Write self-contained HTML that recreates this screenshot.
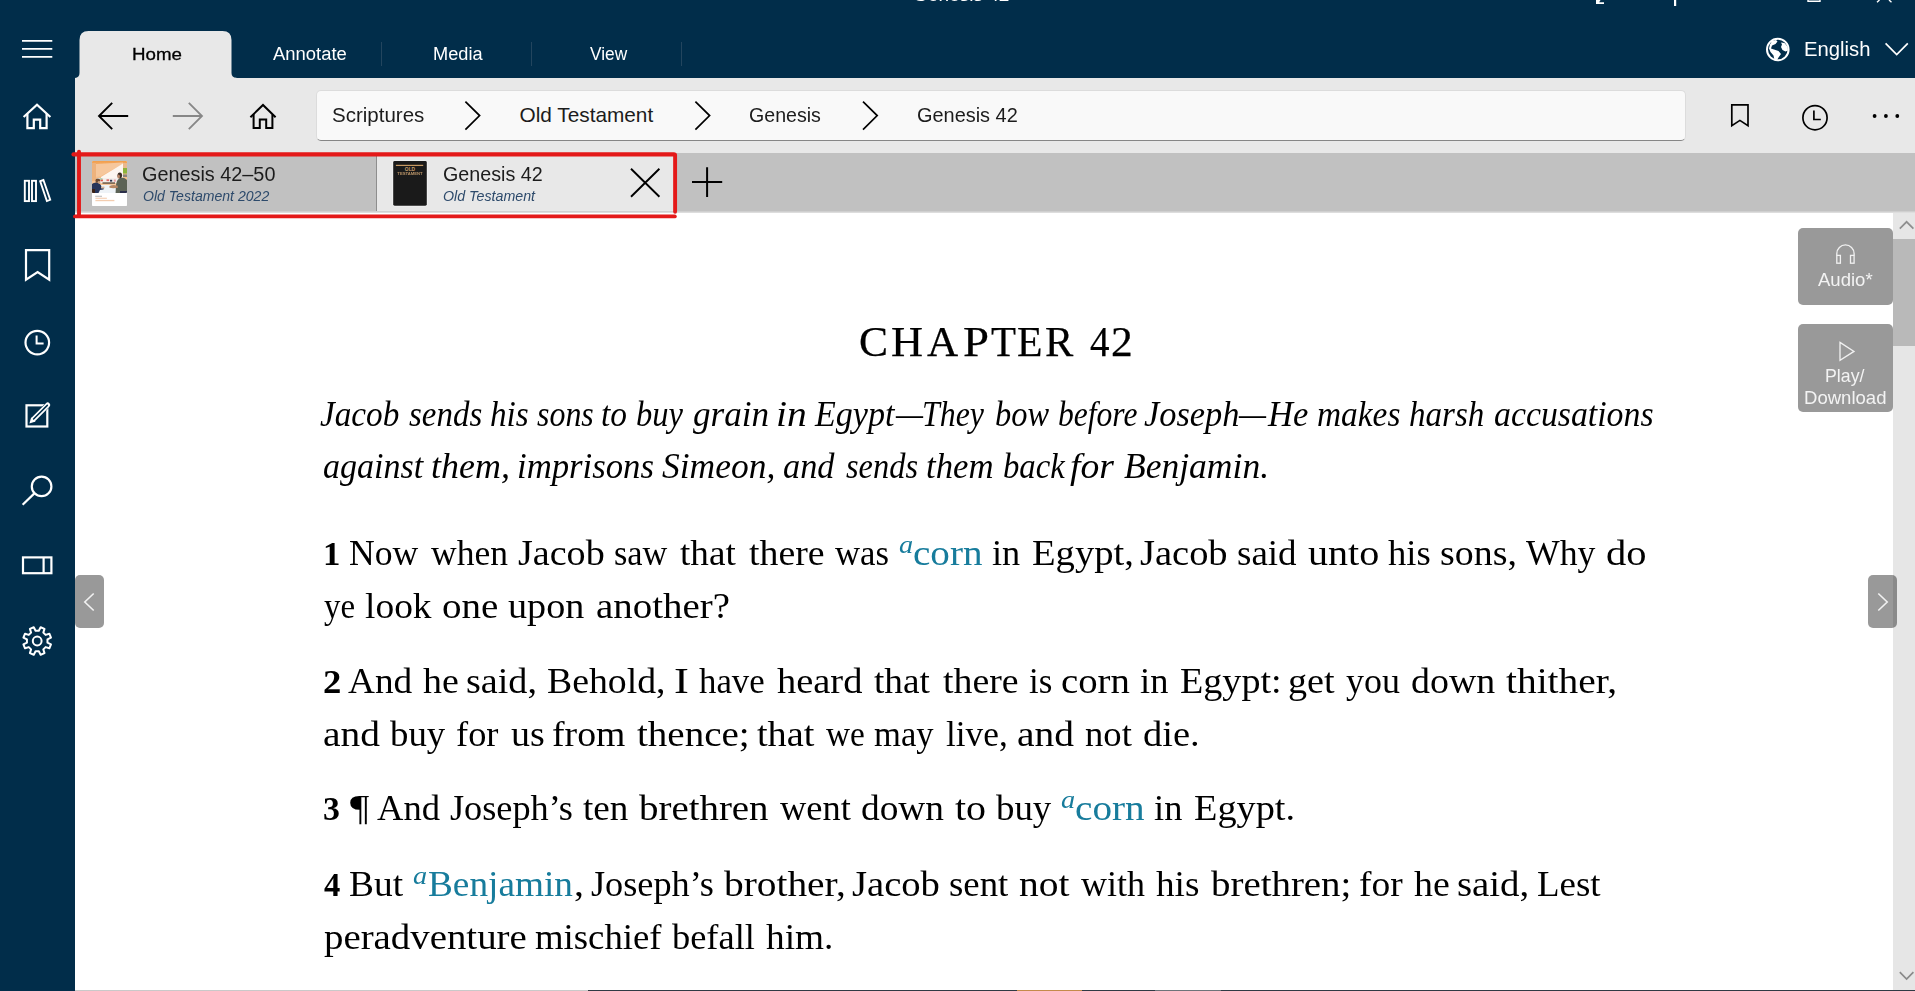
<!DOCTYPE html>
<html lang="en">
<head>
<meta charset="utf-8">
<title>Genesis 42</title>
<style>
*{margin:0;padding:0;box-sizing:border-box}
html,body{width:1915px;height:991px;overflow:hidden;background:#fff}
body{position:relative;font-family:"Liberation Sans",sans-serif;color:#000}
.abs{position:absolute}
.t{position:absolute;white-space:nowrap;line-height:1;transform-origin:0 0}
#topbar{left:0;top:0;width:1915px;height:78px;background:#012d4a}
#sidebar{left:0;top:0;width:75px;height:991px;background:#012d4a}
#navbar{left:75px;top:78px;width:1840px;height:75px;background:#e8e8e8}
#tabbar{left:75px;top:153px;width:1840px;height:58px;background:#c1c1c1}
#tabshadow{left:75px;top:211px;width:1840px;height:2px;background:linear-gradient(#c8c8c8,#e4e4e4)}
#crumb{left:315.5px;top:90px;width:1370.5px;height:51px;background:#f9f9f9;border:1px solid #dcdcdc;border-bottom:1.5px solid #868686;border-radius:5px}
.rt{color:#fff;font-size:17.6px}
.sep{position:absolute;top:42px;width:1px;height:24px;background:#23455e}
.bc{font-size:20px;color:#1a1a1a}
#tab1{left:80px;top:156px;width:297px;height:55px;background:#c1c1c1}
#tab2{left:377px;top:156px;width:297px;height:55px;background:#e8e8e8}
.tt{font-size:20px;color:#1a1a1a}
.ts{font-size:14.6px;font-style:italic;color:#2b4a6e}
#scroll{left:1895px;top:213px;width:20px;height:778px;background:#e6e6e6}
#thumb{left:1895px;top:240px;width:20px;height:106px;background:#c1c1c1}
.sb{position:absolute;background:#999;border-radius:5px;color:#f4f4f4;font-size:17.5px;text-align:center}
.s{font-family:"Liberation Serif",serif;color:#000;font-size:35px}
.hd{-webkit-text-stroke:0.25px #000}
.b{font-weight:bold}.i{font-style:italic}
.lk{color:#177c9c}
</style>
</head>
<body>
<div id="topbar" class="abs"></div>
<div id="sidebar" class="abs"></div>
<div id="navbar" class="abs"></div>
<div id="tabbar" class="abs"></div>
<div id="tabshadow" class="abs"></div>
<div id="crumb" class="abs"></div>

<svg class="abs" style="left:0;top:0" width="1915" height="991" viewBox="0 0 1915 991" fill="none" stroke-linecap="butt" stroke-linejoin="miter">
<!-- ribbon home tab -->
<path d="M75 78.500 V78 Q79.500 77.600 79.500 73 L79.500 40 Q79.500 31 88.500 31 L222.500 31 Q231.500 31 231.500 40 L231.500 73 Q231.500 77.700 236.500 77.700 L236.500 78.500 Z" fill="#e8e8e8"/>
<!-- hamburger -->
<g stroke="#fff" stroke-width="1.9">
<path d="M22 40.9H52.3M22 48.9H52.3M22 56.9H52.3"/>
</g>
<!-- sidebar icons -->
<g stroke="#fff" stroke-width="2.2" stroke-linejoin="miter">
<path d="M23.6 117 L37 104.8 L50.4 117"/>
<path d="M27.4 113.6 V128.2 H33.8 V119.6 H40.2 V128.2 H46.6 V113.6"/>
<g stroke-width="1.9"><rect x="24.8" y="180.8" width="4.2" height="20.3"/>
<rect x="32" y="180.8" width="4" height="20.3"/>
<path d="M40.2 181.2 L43.4 180 L50.2 199.8 L46.9 201.1 Z"/></g>
<path d="M26 250.2 H49.2 V279.6 L37.6 272 L26 279.6 Z"/>
<circle cx="37.3" cy="342.6" r="11.8"/>
<path d="M36.6 335.4 V343.6 H43.6" stroke-width="2"/>
<rect x="26.5" y="405.3" width="20.8" height="21.2" stroke-width="2.2"/>
<path d="M33.6 418.9 L47.7 405" stroke="#012d4a" stroke-width="5.6" stroke-linecap="round"/>
<path d="M33.7 418.9 L47.7 405" stroke-width="5" stroke-linecap="round"/>
<path d="M29.4 423.400 L31.2 417.2 L35.6 421.6 Z" fill="#fff" stroke="none"/>
<path d="M33.6 419 L47.3 405.400" stroke="#012d4a" stroke-width="1.500" stroke-linecap="round"/>
<circle cx="41.6" cy="486.4" r="9.8"/>
<path d="M34.4 493.4 L22.6 504.8"/>
<rect x="23" y="557.4" width="28.4" height="15.8"/>
<path d="M43.6 557.4 V573.2"/>
<circle cx="37.2" cy="641" r="4.4" stroke-width="2"/>
</g>
<!-- gear -->
<path id="gear" d="M47.47 642.63 L50.98 644.44 L49.37 648.31 L45.61 647.11 L43.31 649.41 L44.51 653.17 L40.64 654.78 L38.83 651.27 L35.57 651.27 L33.76 654.78 L29.89 653.17 L31.09 649.41 L28.79 647.11 L25.03 648.31 L23.42 644.44 L26.93 642.63 L26.93 639.37 L23.42 637.56 L25.03 633.69 L28.79 634.89 L31.09 632.59 L29.89 628.83 L33.76 627.22 L35.57 630.73 L38.83 630.73 L40.64 627.22 L44.51 628.83 L43.31 632.59 L45.61 634.89 L49.37 633.69 L50.98 637.56 L47.47 639.37 Z" stroke="#fff" stroke-width="2" stroke-linejoin="round"/>
<!-- nav icons -->
<g stroke="#000" stroke-width="1.7">
<path stroke-width="1.9" d="M98.8 116 H128.2 M112.2 102.8 L99 116 L112.2 129.2"/>
<path d="M250.4 117.2 L263 105 L275.6 117.2" stroke-width="2"/>
<path d="M253.6 114.4 V128 H259.8 V119.6 H266.2 V128 H272.4 V114.4" stroke-width="2"/>
<path d="M465.4 101.6 L479.6 115.6 L465.4 129.6"/>
<path d="M695.4 101.6 L709.6 115.6 L695.4 129.6"/>
<path d="M863 101.6 L877.2 115.6 L863 129.6"/>
<path d="M1731.8 104.8 H1748 V125.6 L1739.9 120.4 L1731.8 125.6 Z"/>
<circle cx="1815" cy="117.7" r="12.1"/>
<path d="M1813.9 110.6 V119.5 H1820.8"/>
</g>
<g stroke="#878787" stroke-width="1.8">
<path d="M172.8 116 H202.2 M188.8 102.8 L202 116 L188.8 129.2"/>
</g>
<g fill="#000"><circle cx="1874.6" cy="116" r="1.9"/><circle cx="1885.9" cy="116" r="1.9"/><circle cx="1897.3" cy="116" r="1.9"/></g>
<!-- globe -->
<circle cx="1777.8" cy="49.5" r="10.8" stroke="#fff" stroke-width="2"/>
<path d="M1772 41 l4 -1 l1.5 1.5 l-2 2.5 l-3.5 1.5 l-1 3 l3 1 l4.5 1.5 l2.5 3 l-2.5 3.5 l-2 3.5 l-2 -0.5 l-1 -5 l-3 -3.500 l-1.5 -3.500 l1 -4 Z" fill="#fff"/>
<path d="M1781 42.500 l3.500 0.500 l3 3.500 l0.500 4 l-2.500 1 l-3 -1.500 l-1.500 -3 l1 -2.500 Z" fill="#fff"/>
<path d="M1885.6 43.4 L1896.7 54.6 L1907.8 43.4" stroke="#fff" stroke-width="1.7"/>
<!-- window control fragments -->
<path d="M1596 0 H1600.500 L1599.200 2.200 H1604 V4 H1596 Z" fill="#fff"/>
<rect x="1674" y="0" width="2.200" height="6" fill="#fff"/>
<g stroke="#fff" stroke-width="1.400">
<path d="M1808 0 V1.200 H1820 V0"/>
<path d="M1877 2.200 L1879.500 0 M1891.500 2.200 L1889 0"/>
</g>
</svg>

<div class="sep" style="left:380.5px"></div><div class="sep" style="left:530.5px"></div><div class="sep" style="left:680.5px"></div>


<div id="tab1" class="abs"></div>
<div class="abs" style="left:376px;top:156px;width:1px;height:55px;background:#8e8e8e"></div>
<div id="tab2" class="abs"></div>
<!-- thumb 1 -->
<svg class="abs" style="left:92px;top:161px" width="35" height="45" viewBox="0 0 35 45">
<defs>
<linearGradient id="og" x1="0" y1="0" x2="0" y2="1"><stop offset="0" stop-color="#f29538"/><stop offset=".18" stop-color="#f4b172"/><stop offset="1" stop-color="#f6d2b0"/></linearGradient>
<filter id="bl" x="-10%" y="-10%" width="120%" height="120%"><feGaussianBlur stdDeviation="0.55"/></filter>
<clipPath id="cp"><rect width="35" height="32" rx="0.8"/></clipPath>
</defs>
<rect width="35" height="45" rx="0.8" fill="#fff"/>
<g clip-path="url(#cp)"><g filter="url(#bl)">
<rect x="-2" y="-2" width="39" height="36" fill="url(#og)"/>
<rect x="-1" y="2" width="5" height="18" fill="#eeb27c"/>
<path d="M4 3 L31 1.500 L31 3 L9 15 L4 16 Z" fill="#f6c79c"/>
<path d="M9 16 L31 2.500 L31 20 L9 21 Z" fill="#fdf6f0"/>
<rect x="31" y="2" width="5" height="12" fill="#e9b98d"/>
<rect x="31" y="7" width="4.500" height="5.500" fill="#8db43a"/>
<rect x="31" y="13.500" width="5" height="2.500" fill="#8a8478"/>
<rect x="5" y="17" width="24" height="5" fill="#f3eeea"/>
<rect x="8.500" y="18.500" width="2.400" height="1.800" fill="#d8574a"/><rect x="7.500" y="17.500" width="3" height="0.900" fill="#7fb88a"/>
<rect x="14.500" y="18.300" width="2.600" height="1.800" fill="#e06a6a"/>
<rect x="18" y="18.800" width="2.200" height="1.800" fill="#2b3550"/>
<rect x="21.800" y="18.500" width="2" height="2.200" fill="#e79aa0"/>
<rect x="10.500" y="21.300" width="12.500" height="1.500" fill="#6a5847"/>
<path d="M5 24 L28 24 L30 33 L3 33 Z" fill="#eef3f7"/>
<path d="M23.500 33 L24 24 q0.500 -6 5 -7.500 q4 0 6.500 3 V33 Z" fill="#5b6457"/>
<ellipse cx="27.800" cy="14.300" rx="2.300" ry="2.900" fill="#3b2c24"/>
<ellipse cx="26.600" cy="15.500" rx="1.300" ry="1.900" fill="#b98a6c"/>
<path d="M17.500 25 q3 -1.500 8 -0.500 l0.500 2.300 q-5 0.700 -8.500 0 Z" fill="#b88764"/>
<path d="M-1 33 V24 q2 -3 6 -2.500 q4 1 4.500 4.500 l2.500 0.500 l-0.500 2 l-3.500 0.500 L6 33 Z" fill="#27365a"/>
<ellipse cx="5.800" cy="19.800" rx="2.400" ry="2.300" fill="#6b4a32"/>
<ellipse cx="7" cy="21.200" rx="1.300" ry="1.300" fill="#c9a081"/>
<path d="M9 26 q2 -1 3.500 -0.300 l0 1.500 q-2 0.500 -3.500 0 Z" fill="#d7b79c"/>
<rect x="-1" y="28" width="4" height="5" fill="#3a2418"/>
<rect x="28" y="30" width="8" height="3" fill="#2a2f4a"/>
</g></g>
<rect x="3.200" y="34.800" width="6.800" height="0.800" fill="#a5a5a5"/>
<rect x="3.400" y="36.700" width="11.500" height="1.100" fill="#f3cdb0"/><rect x="3.400" y="38.900" width="19" height="1.300" fill="#f3cdb0"/>
</svg>
<!-- thumb 2 -->
<svg class="abs" style="left:392px;top:160px" width="36" height="47" viewBox="-1 -1 36 47">
<rect x="-0.600" y="-0.600" width="35.200" height="46" rx="1.800" fill="#f3f3f3"/>
<rect x="0.200" y="0.100" width="33.600" height="44.600" rx="1.400" fill="#1a1a1a"/>
<rect x="2.900" y="3.800" width="27.300" height="1.200" fill="#c79a63"/>
<text x="17" y="9.600" font-family="Liberation Sans" font-weight="bold" font-size="4.900" fill="#c9a070" text-anchor="middle">OLD</text>
<text x="17" y="14" font-family="Liberation Sans" font-weight="bold" font-size="4.200" fill="#c9a070" text-anchor="middle" opacity=".9">TESTAMENT</text>
</svg>
<svg class="abs" style="left:0;top:0" width="1915" height="991" viewBox="0 0 1915 991" fill="none">
<path d="M631 168.800 L659.400 196.800 M659.400 168.800 L631 196.800" stroke="#000" stroke-width="1.900"/>
<path d="M692 182.100 H722.200 M707.100 167.300 V197" stroke="#000" stroke-width="2"/>
<!-- red annotation -->
<g stroke="#e41919" stroke-width="3.900" stroke-linecap="round">
<path d="M73.500 154.400 H674" stroke-width="4.200"/><path d="M675.100 154.800 V211.800" stroke-width="3.900"/>
<path d="M79 151.600 V215"/>
<path d="M75 216.400 H674.800"/>
</g>
</svg>

<!-- CONTENT-START -->

<!-- CONTENT-END -->
<!-- WORDS-START -->
<div class="t s hd" style="left:858.78px;top:321.00px;font-size:42.0px;transform:scaleX(1.0375)">C</div>
<div class="t s hd" style="left:891.28px;top:321.00px;font-size:42.0px;transform:scaleX(1.0571)">H</div>
<div class="t s hd" style="left:926.79px;top:321.00px;font-size:42.0px;transform:scaleX(1.0271)">A</div>
<div class="t s hd" style="left:963.21px;top:321.00px;font-size:42.0px;transform:scaleX(1.1122)">P</div>
<div class="t s hd" style="left:990.57px;top:321.00px;font-size:42.0px;transform:scaleX(0.9732)">T</div>
<div class="t s hd" style="left:1016.86px;top:321.00px;font-size:42.0px;transform:scaleX(0.9933)">E</div>
<div class="t s hd" style="left:1045.24px;top:321.00px;font-size:42.0px;transform:scaleX(1.0093)">R</div>
<div class="t s hd" style="left:1089.80px;top:321.00px;font-size:42.0px;transform:scaleX(0.9282)">4</div>
<div class="t s hd" style="left:1111.39px;top:321.00px;font-size:42.0px;transform:scaleX(1.0353)">2</div>
<div class="t s i" style="left:320.03px;top:397.00px;font-size:35.5px;transform:scaleX(0.9357)">Jacob</div>
<div class="t s i" style="left:408.54px;top:397.00px;font-size:35.5px;transform:scaleX(0.9282)">sends</div>
<div class="t s i" style="left:490.03px;top:397.00px;font-size:35.5px;transform:scaleX(0.9359)">his</div>
<div class="t s i" style="left:536.55px;top:397.00px;font-size:35.5px;transform:scaleX(0.8992)">sons</div>
<div class="t s i" style="left:601.49px;top:397.00px;font-size:35.5px;transform:scaleX(0.9400)">to</div>
<div class="t s i" style="left:635.75px;top:397.00px;font-size:35.5px;transform:scaleX(0.9160)">buy</div>
<div class="t s i" style="left:693.30px;top:397.00px;font-size:35.5px;transform:scaleX(0.9894)">grain</div>
<div class="t s i" style="left:776.27px;top:397.00px;font-size:35.5px;transform:scaleX(1.1134)">in</div>
<div class="t s i" style="left:815.38px;top:397.00px;font-size:35.5px;transform:scaleX(0.9595)">Egypt</div>
<div class="t s i" style="left:896.21px;top:397.00px;font-size:35.5px;transform:scaleX(0.8562)">—</div>
<div class="t s i" style="left:922.18px;top:397.00px;font-size:35.5px;transform:scaleX(0.8974)">They</div>
<div class="t s i" style="left:994.76px;top:397.00px;font-size:35.5px;transform:scaleX(0.9143)">bow</div>
<div class="t s i" style="left:1058.19px;top:397.00px;font-size:35.5px;transform:scaleX(0.8894)">before</div>
<div class="t s i" style="left:1144.02px;top:397.00px;font-size:35.5px;transform:scaleX(0.9689)">Joseph</div>
<div class="t s i" style="left:1238.71px;top:397.00px;font-size:35.5px;transform:scaleX(0.8563)">—</div>
<div class="t s i" style="left:1268.39px;top:397.00px;font-size:35.5px;transform:scaleX(0.9732)">He</div>
<div class="t s i" style="left:1317.22px;top:397.00px;font-size:35.5px;transform:scaleX(0.9403)">makes</div>
<div class="t s i" style="left:1408.84px;top:397.00px;font-size:35.5px;transform:scaleX(0.9316)">harsh</div>
<div class="t s i" style="left:1493.65px;top:397.00px;font-size:35.5px;transform:scaleX(0.9517)">accusations</div>
<div class="t s i" style="left:323.44px;top:449.00px;font-size:35.5px;transform:scaleX(0.9583)">against</div>
<div class="t s i" style="left:430.98px;top:449.00px;font-size:35.5px;transform:scaleX(1.0128)">them,</div>
<div class="t s i" style="left:517.44px;top:449.00px;font-size:35.5px;transform:scaleX(0.9781)">imprisons</div>
<div class="t s i" style="left:662.30px;top:449.00px;font-size:35.5px;transform:scaleX(0.9995)">Simeon,</div>
<div class="t s i" style="left:783.43px;top:449.00px;font-size:35.5px;transform:scaleX(0.9665)">and</div>
<div class="t s i" style="left:846.14px;top:449.00px;font-size:35.5px;transform:scaleX(0.9126)">sends</div>
<div class="t s i" style="left:926.23px;top:449.00px;font-size:35.5px;transform:scaleX(0.9788)">them</div>
<div class="t s i" style="left:1002.95px;top:449.00px;font-size:35.5px;transform:scaleX(0.9223)">back</div>
<div class="t s i" style="left:1070.47px;top:449.00px;font-size:35.5px;transform:scaleX(1.0610)">for</div>
<div class="t s i" style="left:1123.65px;top:449.00px;font-size:35.5px;transform:scaleX(1.0007)">Benjamin.</div>
<div class="t s b" style="left:322.97px;top:538.00px;font-size:33.0px;transform:scaleX(1.0531)">1</div>
<div class="t s" style="left:349.18px;top:536.00px;transform:scaleX(1.0179)">Now</div>
<div class="t s" style="left:431.30px;top:536.00px;transform:scaleX(1.0153)">when</div>
<div class="t s" style="left:517.78px;top:536.00px;transform:scaleX(1.0877)">Jacob</div>
<div class="t s" style="left:614.33px;top:536.00px;transform:scaleX(0.9801)">saw</div>
<div class="t s" style="left:680.13px;top:536.00px;transform:scaleX(1.0615)">that</div>
<div class="t s" style="left:749.13px;top:536.00px;transform:scaleX(1.0803)">there</div>
<div class="t s" style="left:835.20px;top:536.00px;transform:scaleX(0.9915)">was</div>
<div class="t s i lk" style="left:898.77px;top:532.00px;font-size:25.5px;transform:scaleX(1.1091)">a</div>
<div class="t s lk" style="left:913.00px;top:536.00px;transform:scaleX(1.1174)">corn</div>
<div class="t s" style="left:991.82px;top:536.00px;transform:scaleX(1.0385)">in</div>
<div class="t s" style="left:1031.50px;top:536.00px;transform:scaleX(1.1048)">Egypt,</div>
<div class="t s" style="left:1140.18px;top:536.00px;transform:scaleX(1.0994)">Jacob</div>
<div class="t s" style="left:1236.61px;top:536.00px;transform:scaleX(1.0569)">said</div>
<div class="t s" style="left:1308.13px;top:536.00px;transform:scaleX(1.1455)">unto</div>
<div class="t s" style="left:1388.34px;top:536.00px;transform:scaleX(1.0471)">his</div>
<div class="t s" style="left:1439.88px;top:536.00px;transform:scaleX(1.0825)">sons,</div>
<div class="t s" style="left:1526.00px;top:536.00px;transform:scaleX(1.0206)">Why</div>
<div class="t s" style="left:1605.65px;top:536.00px;transform:scaleX(1.1569)">do</div>
<div class="t s" style="left:323.93px;top:589.00px;transform:scaleX(0.9408)">ye</div>
<div class="t s" style="left:364.70px;top:589.00px;transform:scaleX(1.0699)">look</div>
<div class="t s" style="left:441.71px;top:589.00px;transform:scaleX(1.1146)">one</div>
<div class="t s" style="left:508.36px;top:589.00px;transform:scaleX(1.0899)">upon</div>
<div class="t s" style="left:595.61px;top:589.00px;transform:scaleX(1.1117)">another?</div>
<div class="t s b" style="left:323.01px;top:666.00px;font-size:33.0px;transform:scaleX(1.1127)">2</div>
<div class="t s" style="left:347.63px;top:664.00px;transform:scaleX(1.0655)">And</div>
<div class="t s" style="left:422.83px;top:664.00px;transform:scaleX(1.0825)">he</div>
<div class="t s" style="left:466.07px;top:664.00px;transform:scaleX(1.0894)">said,</div>
<div class="t s" style="left:546.52px;top:664.00px;transform:scaleX(1.0792)">Behold,</div>
<div class="t s" style="left:674.11px;top:664.00px;transform:scaleX(1.2757)">I</div>
<div class="t s" style="left:698.95px;top:664.00px;transform:scaleX(0.9931)">have</div>
<div class="t s" style="left:777.33px;top:664.00px;transform:scaleX(1.0987)">heard</div>
<div class="t s" style="left:873.63px;top:664.00px;transform:scaleX(1.0635)">that</div>
<div class="t s" style="left:943.03px;top:664.00px;transform:scaleX(1.0803)">there</div>
<div class="t s" style="left:1029.45px;top:664.00px;transform:scaleX(0.9976)">is</div>
<div class="t s" style="left:1060.52px;top:664.00px;transform:scaleX(1.1074)">corn</div>
<div class="t s" style="left:1139.82px;top:664.00px;transform:scaleX(1.0423)">in</div>
<div class="t s" style="left:1179.51px;top:664.00px;transform:scaleX(1.0894)">Egypt:</div>
<div class="t s" style="left:1288.16px;top:664.00px;transform:scaleX(1.0902)">get</div>
<div class="t s" style="left:1345.69px;top:664.00px;transform:scaleX(1.0272)">you</div>
<div class="t s" style="left:1410.65px;top:664.00px;transform:scaleX(1.0829)">down</div>
<div class="t s" style="left:1505.72px;top:664.00px;transform:scaleX(1.1262)">thither,</div>
<div class="t s" style="left:322.99px;top:717.00px;transform:scaleX(1.1265)">and</div>
<div class="t s" style="left:390.20px;top:717.00px;transform:scaleX(1.0514)">buy</div>
<div class="t s" style="left:456.16px;top:717.00px;transform:scaleX(1.0405)">for</div>
<div class="t s" style="left:510.66px;top:717.00px;transform:scaleX(1.0838)">us</div>
<div class="t s" style="left:552.42px;top:717.00px;transform:scaleX(1.0782)">from</div>
<div class="t s" style="left:636.62px;top:717.00px;transform:scaleX(1.1153)">thence;</div>
<div class="t s" style="left:756.93px;top:717.00px;transform:scaleX(1.0923)">that</div>
<div class="t s" style="left:825.80px;top:717.00px;transform:scaleX(0.9519)">we</div>
<div class="t s" style="left:874.36px;top:717.00px;transform:scaleX(0.9882)">may</div>
<div class="t s" style="left:946.04px;top:717.00px;transform:scaleX(1.0077)">live,</div>
<div class="t s" style="left:1017.09px;top:717.00px;transform:scaleX(1.1265)">and</div>
<div class="t s" style="left:1084.61px;top:717.00px;transform:scaleX(1.0469)">not</div>
<div class="t s" style="left:1142.83px;top:717.00px;transform:scaleX(1.1000)">die.</div>
<div class="t s b" style="left:323.12px;top:793.00px;font-size:33.0px;transform:scaleX(1.0246)">3</div>
<div class="t s" style="left:349.80px;top:791.00px;transform:scaleX(1.2129)">¶</div>
<div class="t s" style="left:377.04px;top:791.00px;transform:scaleX(1.0454)">And</div>
<div class="t s" style="left:449.62px;top:791.00px;transform:scaleX(1.0361)">Joseph’s</div>
<div class="t s" style="left:582.63px;top:791.00px;transform:scaleX(1.0619)">ten</div>
<div class="t s" style="left:639.30px;top:791.00px;transform:scaleX(1.1112)">brethren</div>
<div class="t s" style="left:779.90px;top:791.00px;transform:scaleX(1.0406)">went</div>
<div class="t s" style="left:860.87px;top:791.00px;transform:scaleX(1.0671)">down</div>
<div class="t s" style="left:954.71px;top:791.00px;transform:scaleX(1.1417)">to</div>
<div class="t s" style="left:996.10px;top:791.00px;transform:scaleX(1.0533)">buy</div>
<div class="t s i lk" style="left:1061.07px;top:787.00px;font-size:25.5px;transform:scaleX(1.1091)">a</div>
<div class="t s lk" style="left:1075.10px;top:791.00px;transform:scaleX(1.1190)">corn</div>
<div class="t s" style="left:1153.92px;top:791.00px;transform:scaleX(1.0423)">in</div>
<div class="t s" style="left:1194.11px;top:791.00px;transform:scaleX(1.0944)">Egypt.</div>
<div class="t s b" style="left:323.91px;top:869.00px;font-size:33.0px;transform:scaleX(0.9871)">4</div>
<div class="t s" style="left:349.13px;top:867.00px;transform:scaleX(1.0687)">But</div>
<div class="t s i lk" style="left:412.87px;top:863.00px;font-size:25.5px;transform:scaleX(1.1091)">a</div>
<div class="t s lk" style="left:427.93px;top:867.00px;transform:scaleX(1.0654)">Benjamin</div>
<div class="t s" style="left:574.17px;top:867.00px;transform:scaleX(1.1429)">,</div>
<div class="t s" style="left:590.62px;top:867.00px;transform:scaleX(1.0361)">Joseph’s</div>
<div class="t s" style="left:723.90px;top:867.00px;transform:scaleX(1.1247)">brother,</div>
<div class="t s" style="left:852.27px;top:867.00px;transform:scaleX(1.1032)">Jacob</div>
<div class="t s" style="left:948.72px;top:867.00px;transform:scaleX(1.0521)">sent</div>
<div class="t s" style="left:1018.75px;top:867.00px;transform:scaleX(1.1291)">not</div>
<div class="t s" style="left:1080.70px;top:867.00px;transform:scaleX(1.0283)">with</div>
<div class="t s" style="left:1155.63px;top:867.00px;transform:scaleX(1.0624)">his</div>
<div class="t s" style="left:1210.50px;top:867.00px;transform:scaleX(1.1111)">brethren;</div>
<div class="t s" style="left:1358.63px;top:867.00px;transform:scaleX(1.0709)">for</div>
<div class="t s" style="left:1413.53px;top:867.00px;transform:scaleX(1.0825)">he</div>
<div class="t s" style="left:1456.74px;top:867.00px;transform:scaleX(1.1089)">said,</div>
<div class="t s" style="left:1537.24px;top:867.00px;transform:scaleX(1.0559)">Lest</div>
<div class="t s" style="left:323.85px;top:920.00px;transform:scaleX(1.1099)">peradventure</div>
<div class="t s" style="left:535.11px;top:920.00px;transform:scaleX(1.0497)">mischief</div>
<div class="t s" style="left:672.20px;top:920.00px;transform:scaleX(1.0405)">befall</div>
<div class="t s" style="left:765.53px;top:920.00px;transform:scaleX(1.0650)">him.</div>
<!-- WORDS-END -->

<div id="scroll" class="abs" style="left:1893px;width:22px"></div>
<div id="thumb" class="abs" style="left:1893px;width:22px;top:239px;height:106.500px;background:#b9b9b9"></div>
<div class="sb" style="left:1798px;top:228px;width:95px;height:77px"></div>
<div class="sb" style="left:1798px;top:324px;width:95px;height:88px"></div>
<div class="sb" style="left:75px;top:574.700px;width:29.100px;height:53.200px;border-radius:5px"></div>
<div class="sb" style="left:1867.900px;top:574.700px;width:29.300px;height:53.200px;border-radius:5px;background:rgba(0,0,0,.4)"></div>
<svg class="abs" style="left:0;top:0" width="1915" height="991" viewBox="0 0 1915 991" fill="none">
<g stroke="#f1f1f1" stroke-width="1.300">
<path d="M1836.800 255.500 V253.600 A8.650 8.650 0 0 1 1854.100 253.600 V255.500"/>
<rect x="1836.800" y="255.400" width="3.600" height="7.800"/>
<rect x="1850.500" y="255.400" width="3.600" height="7.800"/>
<path d="M1840 342.400 L1854 351.400 L1840 360.400 Z" stroke-linejoin="miter"/>
<path d="M93.700 593.500 L84.800 602 L93.700 610.500" stroke-width="1.600"/>
<path d="M1878.300 593.500 L1887.200 602 L1878.300 610.500" stroke-width="1.600"/>
</g>
<g stroke="#8e8e8e" stroke-width="1.700">
<path d="M1899.800 228.600 L1906.600 221.800 L1913.400 228.600"/>
<path d="M1899.800 972.200 L1906.600 979 L1913.400 972.200" stroke="#8a8a8a"/>
</g>
</svg>
<div class="abs" style="left:75px;top:990px;width:513px;height:1px;background:#c9c9c9"></div>
<div class="abs" style="left:588px;top:990px;width:1327px;height:1px;background:#2f3a44"></div>
<div class="abs" style="left:1017px;top:990px;width:65px;height:1px;background:#c58a4a"></div>
<div class="abs" style="left:1155px;top:990px;width:66px;height:1px;background:#6e747a"></div>

<!-- SANS-START -->
<div class="t" style="left:913.46px;top:-13.00px;font-size:17.0px;color:#fff;transform:scaleX(1.1207)">Genesis 42</div>
<div class="t" style="left:132.19px;top:46.00px;font-size:17.4px;color:#000;-webkit-text-stroke:0.3px #000;transform:scaleX(1.0757)">Home</div>
<div class="t" style="left:272.90px;top:46.00px;font-size:17.6px;color:#fff;transform:scaleX(1.0480)">Annotate</div>
<div class="t" style="left:432.75px;top:46.00px;font-size:17.6px;color:#fff;transform:scaleX(1.0344)">Media</div>
<div class="t" style="left:590.40px;top:46.00px;font-size:17.6px;color:#fff;transform:scaleX(0.9828)">View</div>
<div class="t" style="left:1804.07px;top:40.00px;font-size:19.8px;color:#fff;transform:scaleX(1.0233)">English</div>
<div class="t" style="left:331.71px;top:105.00px;font-size:20.8px;color:#1c1c1c;transform:scaleX(0.9864)">Scriptures</div>
<div class="t" style="left:519.50px;top:105.00px;font-size:20.8px;color:#1c1c1c;transform:scaleX(1.0000)">Old Testament</div>
<div class="t" style="left:749.36px;top:105.00px;font-size:20.8px;color:#1c1c1c;transform:scaleX(0.9423)">Genesis</div>
<div class="t" style="left:917.14px;top:105.00px;font-size:20.8px;color:#1c1c1c;transform:scaleX(0.9579)">Genesis 42</div>
<div class="t" style="left:142.49px;top:165.00px;font-size:19.6px;color:#1c1c1c;transform:scaleX(1.0123)">Genesis 42–50</div>
<div class="t" style="left:143.18px;top:189.00px;font-size:14.67px;color:#2d4a6b;font-style:italic;transform:scaleX(0.9602)">Old Testament 2022</div>
<div class="t" style="left:442.79px;top:165.00px;font-size:19.6px;color:#1c1c1c;transform:scaleX(1.0057)">Genesis 42</div>
<div class="t" style="left:443.17px;top:189.00px;font-size:14.67px;color:#2d4a6b;font-style:italic;transform:scaleX(0.9714)">Old Testament</div>
<div class="t" style="left:1818.10px;top:271.00px;font-size:18.2px;color:#f3f3f3;transform:scaleX(1.0197)">Audio*</div>
<div class="t" style="left:1825.33px;top:367.00px;font-size:18.2px;color:#f3f3f3;transform:scaleX(0.9769)">Play/</div>
<div class="t" style="left:1804.27px;top:389.00px;font-size:18.2px;color:#f3f3f3;transform:scaleX(1.0198)">Download</div>
<!-- SANS-END -->
</body>
</html>
